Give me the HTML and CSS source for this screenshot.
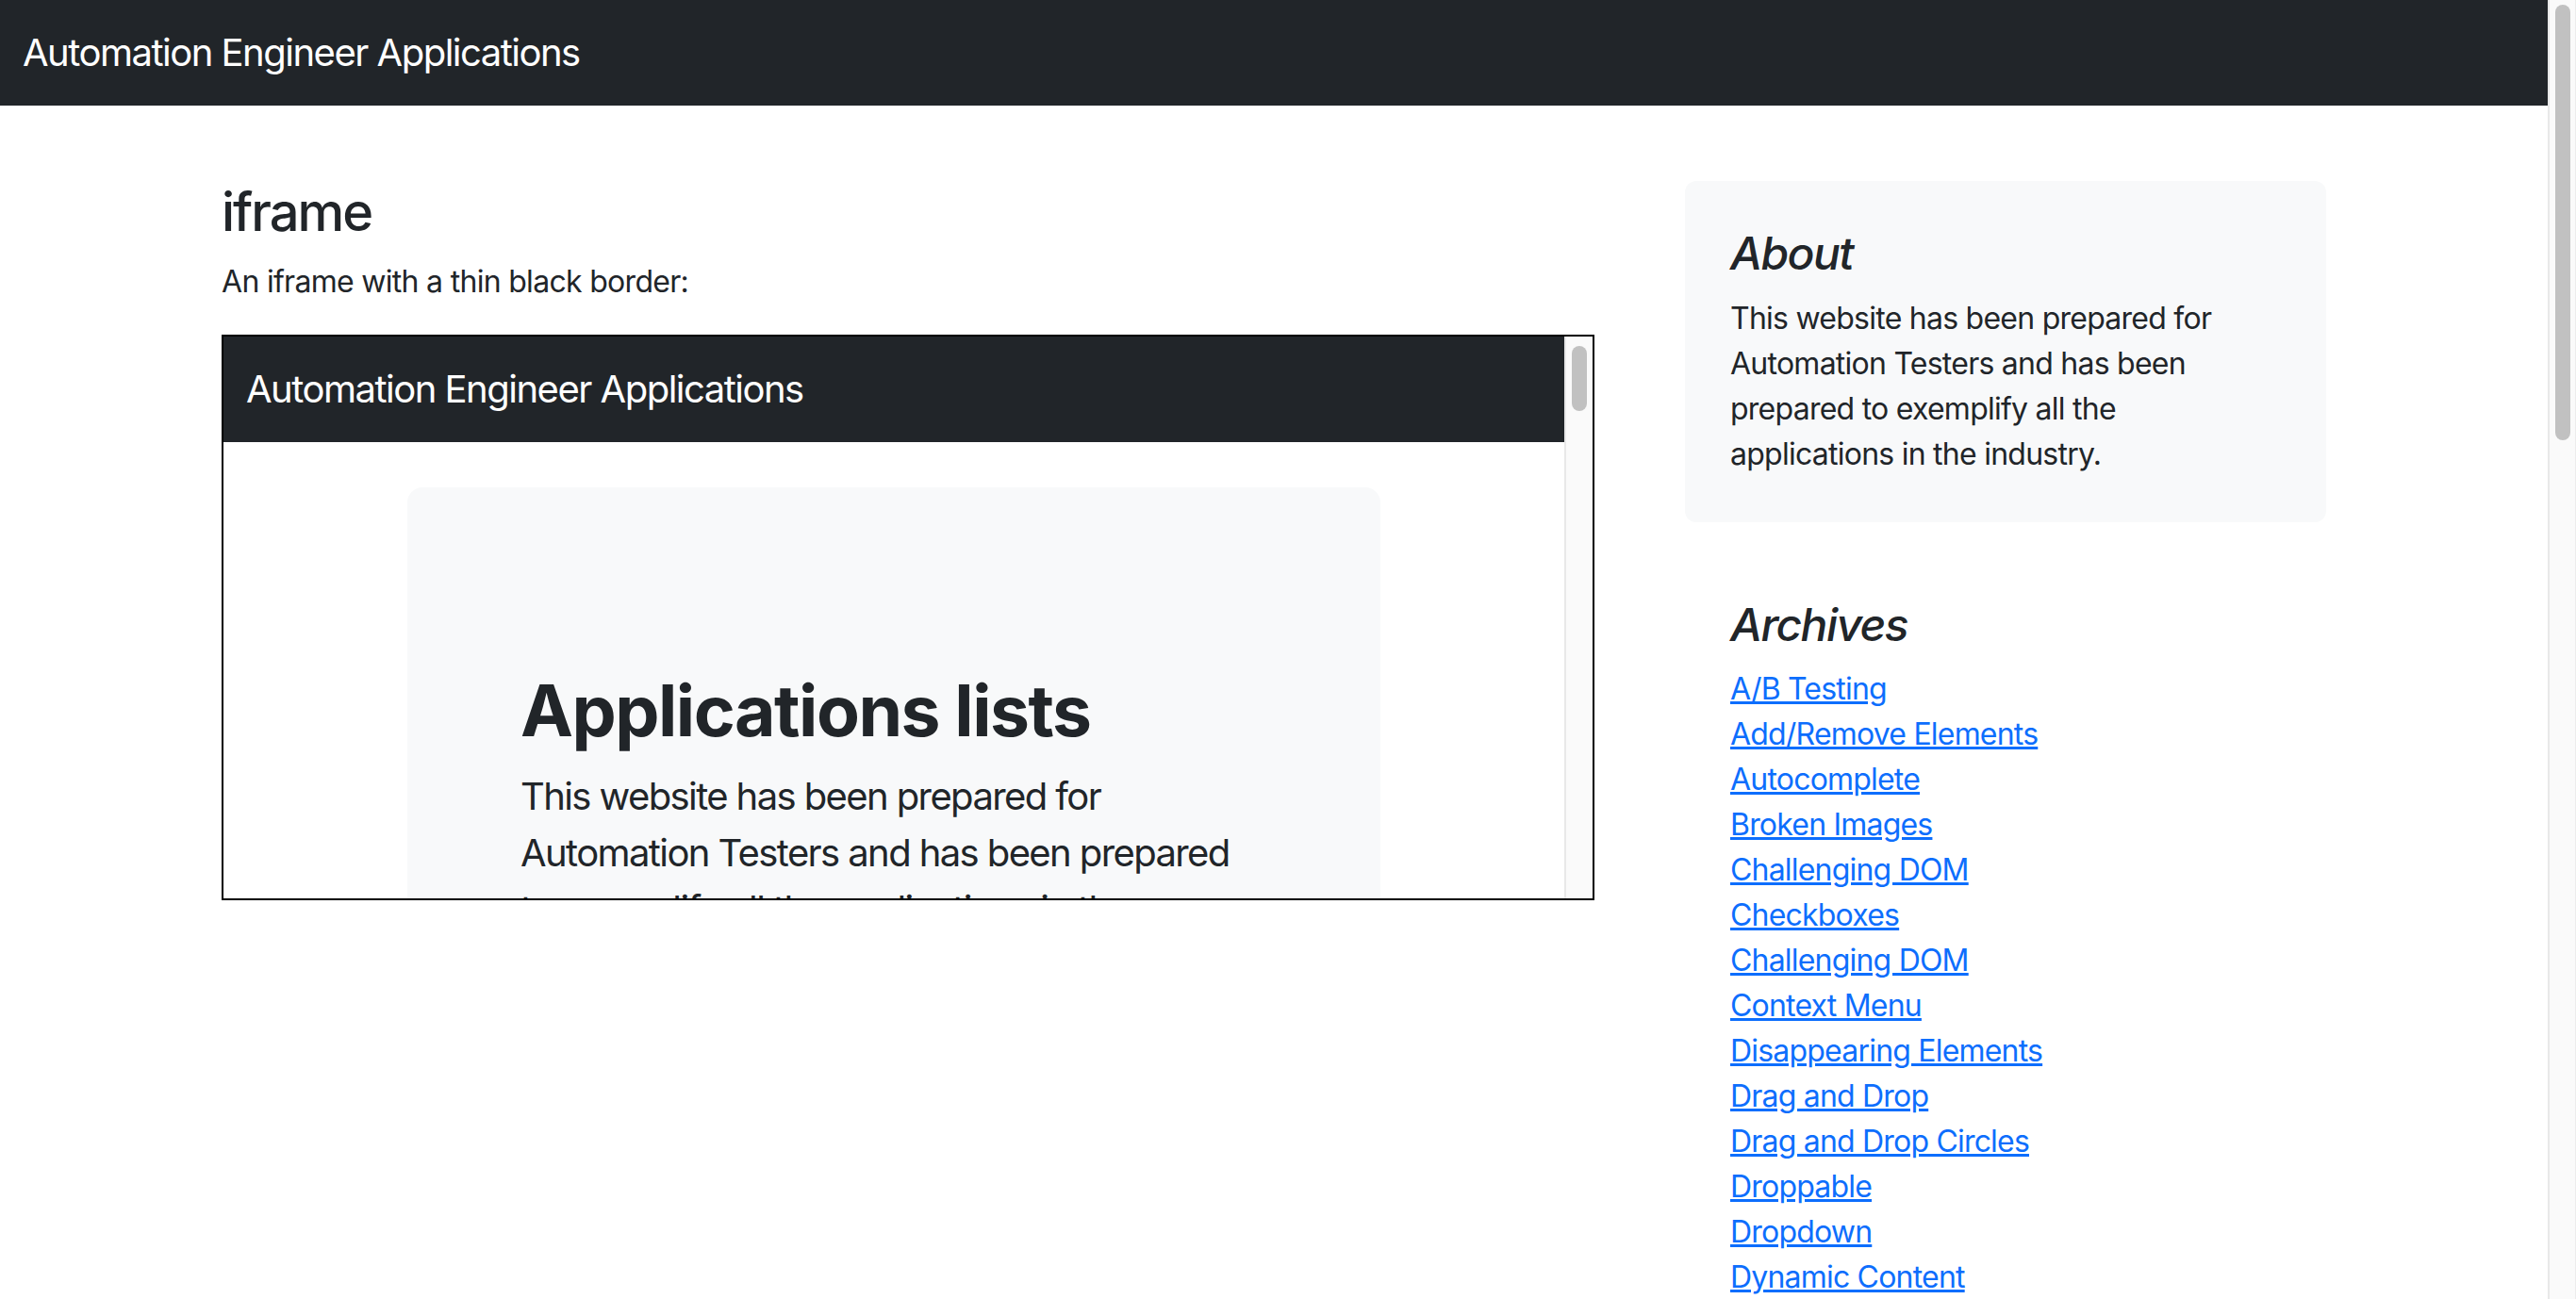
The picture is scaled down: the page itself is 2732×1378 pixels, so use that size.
FILE: index.html
```html
<!DOCTYPE html>
<html lang="en">
<head>
<meta charset="utf-8">
<title>iframe</title>
<link rel="stylesheet" href="styles.css">
</head>
<body>
<div class="window">
  <div class="viewport">
    <nav class="navbar"><span class="brand">Automation Engineer Applications</span></nav>
    <main class="container">
      <div class="row">
        <section class="col-main">
          <h3 class="title">iframe</h3>
          <p class="intro">An iframe with a thin black border:</p>
          <div class="frame">
            <div class="frame-view">
              <nav class="navbar"><span class="brand">Automation Engineer Applications</span></nav>
              <div class="frame-container">
                <div class="jumbo">
                  <h1 class="jumbo-title">Applications lists</h1>
                  <p class="jumbo-text">This website has been prepared for<br>Automation Testers and has been prepared<br>to exemplify all the applications in the<br>industry.</p>
                </div>
              </div>
            </div>
            <div class="scrollbar scrollbar-inner"><div class="thumb thumb-inner"></div></div>
          </div>
        </section>
        <aside class="col-side">
          <div class="about">
            <h4 class="side-title">About</h4>
            <p class="about-text">This website has been prepared for Automation Testers and has been prepared to exemplify all the applications in the industry.</p>
          </div>
          <div class="archives">
            <h4 class="side-title">Archives</h4>
            <ol class="links">
              <li><a href="#">A/B Testing</a></li>
              <li><a href="#">Add/Remove Elements</a></li>
              <li><a href="#">Autocomplete</a></li>
              <li><a href="#">Broken Images</a></li>
              <li><a href="#">Challenging DOM</a></li>
              <li><a href="#">Checkboxes</a></li>
              <li><a href="#">Challenging DOM</a></li>
              <li><a href="#">Context Menu</a></li>
              <li><a href="#">Disappearing Elements</a></li>
              <li><a href="#">Drag and Drop</a></li>
              <li><a href="#">Drag and Drop Circles</a></li>
              <li><a href="#">Droppable</a></li>
              <li><a href="#">Dropdown</a></li>
              <li><a href="#">Dynamic Content</a></li>
              <li><a href="#">Dynamic Controls</a></li>
              <li><a href="#">Dynamic Loading</a></li>
            </ol>
          </div>
        </aside>
      </div>
    </main>
  </div>
  <div class="scrollbar scrollbar-page"><div class="thumb thumb-page"></div></div>
</div>
</body>
</html>
```
FILE: styles.css
```css
html, body {
  margin: 0;
  padding: 0;
  height: 100%;
  overflow: hidden;
}
body {
  font-family: Inter, "Noto Sans", "Liberation Sans", sans-serif;
  font-size: 32px;
  line-height: 1.5;
  color: #212529;
  background: #fff;
}
.window {
  display: flex;
  height: 100%;
}
.viewport {
  flex: 1;
  min-width: 0;
  overflow: hidden;
}
.navbar {
  background: #212529;
  height: 112px;
  box-sizing: border-box;
  padding: 26px 24px;
  display: flex;
  align-items: center;
}
.brand {
  color: #fff;
  font-size: 40px;
  line-height: 60px;
  white-space: nowrap;
  letter-spacing: -1.5px;
}
.container {
  width: 2232px;
  margin: 80px auto 0;
}
.row {
  display: grid;
  grid-template-columns: 1456px 680px;
  column-gap: 96px;
  align-items: start;
}
.title {
  margin: 0 0 16px;
  font-size: 56px;
  line-height: 1.2;
  font-weight: 500;
  letter-spacing: -2px;
}
.intro {
  margin: 0 0 32px;
  letter-spacing: -0.7px;
}
.frame {
  height: 600px;
  box-sizing: border-box;
  border: 2px solid #000;
  display: flex;
  overflow: hidden;
}
.frame-view {
  flex: 1;
  min-width: 0;
  overflow: hidden;
}
.frame-container {
  width: 1032px;
  margin: 48px auto 0;
}
.jumbo {
  background: #f8f9fa;
  border-radius: 16px;
  padding: 192px 120px;
}
.jumbo-title {
  margin: 0 0 16px;
  font-size: 75px;
  line-height: 1.2;
  font-weight: 700;
  letter-spacing: -1.5px;
  white-space: nowrap;
}
.jumbo-text {
  margin: 0;
  font-size: 40px;
  line-height: 60px;
  letter-spacing: -1.6px;
  white-space: nowrap;
}
.scrollbar {
  width: 30px;
  flex: none;
  box-sizing: border-box;
  background: #fafafa;
  border-left: 2px solid #e8e8e8;
  display: flex;
  justify-content: center;
}
.scrollbar-page {
  border-right: 1px solid #ececec;
}
.thumb {
  width: 16px;
  background: #c1c1c1;
  border-radius: 8px;
}
.thumb-page {
  margin-top: 5px;
  height: 462px;
}
.thumb-inner {
  margin-top: 10px;
  height: 69px;
}
.about {
  background: #f8f9fa;
  border-radius: 12px;
  padding: 48px;
  margin-bottom: 32px;
}
.archives {
  padding: 48px;
}
.side-title {
  margin: 0 0 16px;
  font-size: 48px;
  line-height: 1.2;
  font-weight: 500;
  font-style: italic;
  letter-spacing: -1.6px;
}
.about-text {
  margin: 0;
  letter-spacing: -0.75px;
}
.links {
  list-style: none;
  margin: 0;
  padding: 0;
}
.links a {
  color: #0d6efd;
  text-decoration: underline;
  letter-spacing: -0.8px;
}
```
